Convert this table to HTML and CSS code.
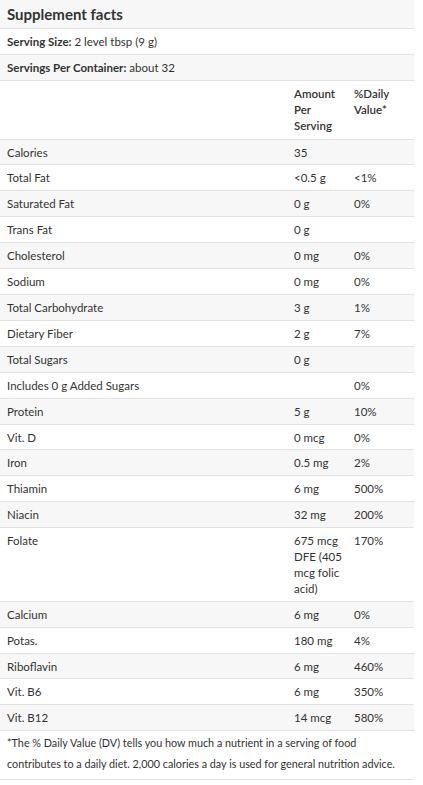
FILE: index.html
```html
<!DOCTYPE html>
<html lang="en">
<head>
  <meta charset="UTF-8">
  <meta name="viewport" content="width=device-width, initial-scale=1.0">
  <title>Supplement facts</title>
  <link rel="stylesheet" href="styles.css">
</head>
<body>
  <table class="facts">
    <colgroup>
      <col class="col-name">
      <col class="col-amount">
      <col class="col-dv">
    </colgroup>
    <tr class="caption"><th colspan="3">Supplement facts</th></tr>
    <tr><td colspan="3"><b>Serving Size:</b> 2 level tbsp (9 g)</td></tr>
    <tr><td colspan="3"><b>Servings Per Container:</b> about 32</td></tr>
    <tr class="head">
      <td></td>
      <td><b>Amount Per Serving</b></td>
      <td><b>%Daily Value*</b></td>
    </tr>
    <tr><td>Calories</td><td>35</td><td></td></tr>
    <tr><td>Total Fat</td><td>&lt;0.5 g</td><td>&lt;1%</td></tr>
    <tr><td>Saturated Fat</td><td>0 g</td><td>0%</td></tr>
    <tr><td>Trans Fat</td><td>0 g</td><td></td></tr>
    <tr><td>Cholesterol</td><td>0 mg</td><td>0%</td></tr>
    <tr><td>Sodium</td><td>0 mg</td><td>0%</td></tr>
    <tr><td>Total Carbohydrate</td><td>3 g</td><td>1%</td></tr>
    <tr><td>Dietary Fiber</td><td>2 g</td><td>7%</td></tr>
    <tr><td>Total Sugars</td><td>0 g</td><td></td></tr>
    <tr><td>Includes 0 g Added Sugars</td><td></td><td>0%</td></tr>
    <tr><td>Protein</td><td>5 g</td><td>10%</td></tr>
    <tr><td>Vit. D</td><td>0 mcg</td><td>0%</td></tr>
    <tr><td>Iron</td><td>0.5 mg</td><td>2%</td></tr>
    <tr><td>Thiamin</td><td>6 mg</td><td>500%</td></tr>
    <tr><td>Niacin</td><td>32 mg</td><td>200%</td></tr>
    <tr><td>Folate</td><td>675 mcg DFE (405 mcg folic acid)</td><td>170%</td></tr>
    <tr><td>Calcium</td><td>6 mg</td><td>0%</td></tr>
    <tr><td>Potas.</td><td>180 mg</td><td>4%</td></tr>
    <tr><td>Riboflavin</td><td>6 mg</td><td>460%</td></tr>
    <tr><td>Vit. B6</td><td>6 mg</td><td>350%</td></tr>
    <tr><td>Vit. B12</td><td>14 mcg</td><td>580%</td></tr>
    <tr class="note">
      <td colspan="3">*The % Daily Value (DV) tells you how much a nutrient in a serving of food contributes to a daily diet. 2,000 calories a day is used for general nutrition advice.</td>
    </tr>
  </table>
</body>
</html>
```

FILE: styles.css
```css
body {
  margin: 0;
  font-family: Lato, "Open Sans", sans-serif;
  font-size: 11.5px;
  color: #333;
  background: #fff;
}
.facts {
  width: 414px;
  border-collapse: collapse;
  table-layout: fixed;
}
.col-name {
  width: 287px;
}
.col-amount {
  width: 60px;
}
.col-dv {
  width: 67px;
}
.facts th,
.facts td {
  padding: 5px 7px 4px;
  line-height: 15.9px;
  text-align: left;
  vertical-align: top;
  border-bottom: 1px solid #e2e2e2;
}
.facts td:nth-child(2) {
  padding-right: 2px;
}
.facts tr:nth-child(odd) {
  background: #f7f7f7;
}
.caption th {
  font-size: 15px;
  line-height: 18px;
  padding: 5px 7px;
}
.head td {
  padding-bottom: 5px;
}
.head b {
  font-weight: 600;
}
.note td {
  font-size: 10.8px;
  line-height: 21px;
  padding: 1px 2px 5px 7px;
}
```
